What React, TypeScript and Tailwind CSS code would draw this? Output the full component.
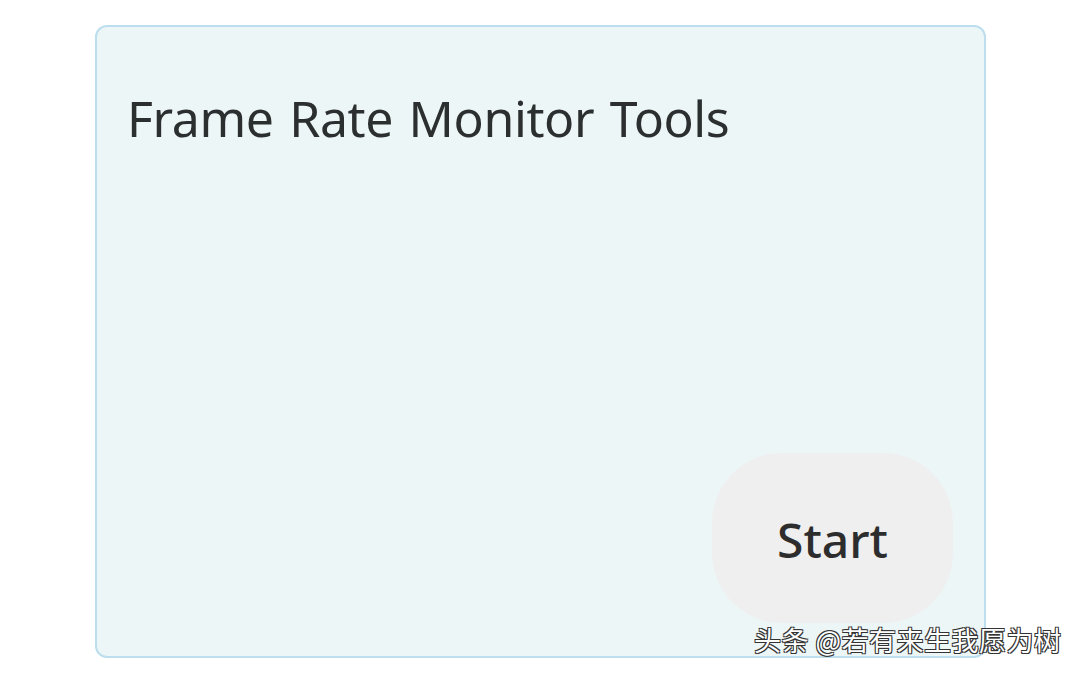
export default function App() {
  return (
    <div className="relative w-[1080px] h-[676px] bg-white overflow-hidden" style={{ fontFamily: '"Noto Sans", "Open Sans", sans-serif' }}>
      <div className="pt-[25px] pl-[95px]">
        <div className="w-[891px] h-[633px] rounded-[12px] border-2 border-[#bcdeee] bg-[#edf6f7] flex flex-col justify-between">
          <h1 className="pl-[30px] pt-[66px] text-[50px] leading-none text-[#2b2f2f] tracking-[-0.4px] [word-spacing:3px]">
            Frame Rate Monitor Tools
          </h1>
          <div className="flex justify-end pr-[31px] pb-[33px]">
            <button className="w-[241px] h-[170px] rounded-[70px] bg-[#efefef] text-[48px] font-medium text-[#2d2d2d] flex items-center justify-center pt-[4px]">
              Start
            </button>
          </div>
        </div>
      </div>
      <div
        className="absolute left-[754px] top-[626px] text-[27px] leading-none text-white tracking-[0.5px]"
        style={{
          fontFamily: '"Noto Sans CJK SC", "Noto Sans", sans-serif',
          textShadow: "1px 1px 0 #333, -1px -1px 0 #333, 1px -1px 0 #333, -1px 1px 0 #333",
        }}
      >
        头条 @若有来生我愿为树
      </div>
    </div>
  );
}
